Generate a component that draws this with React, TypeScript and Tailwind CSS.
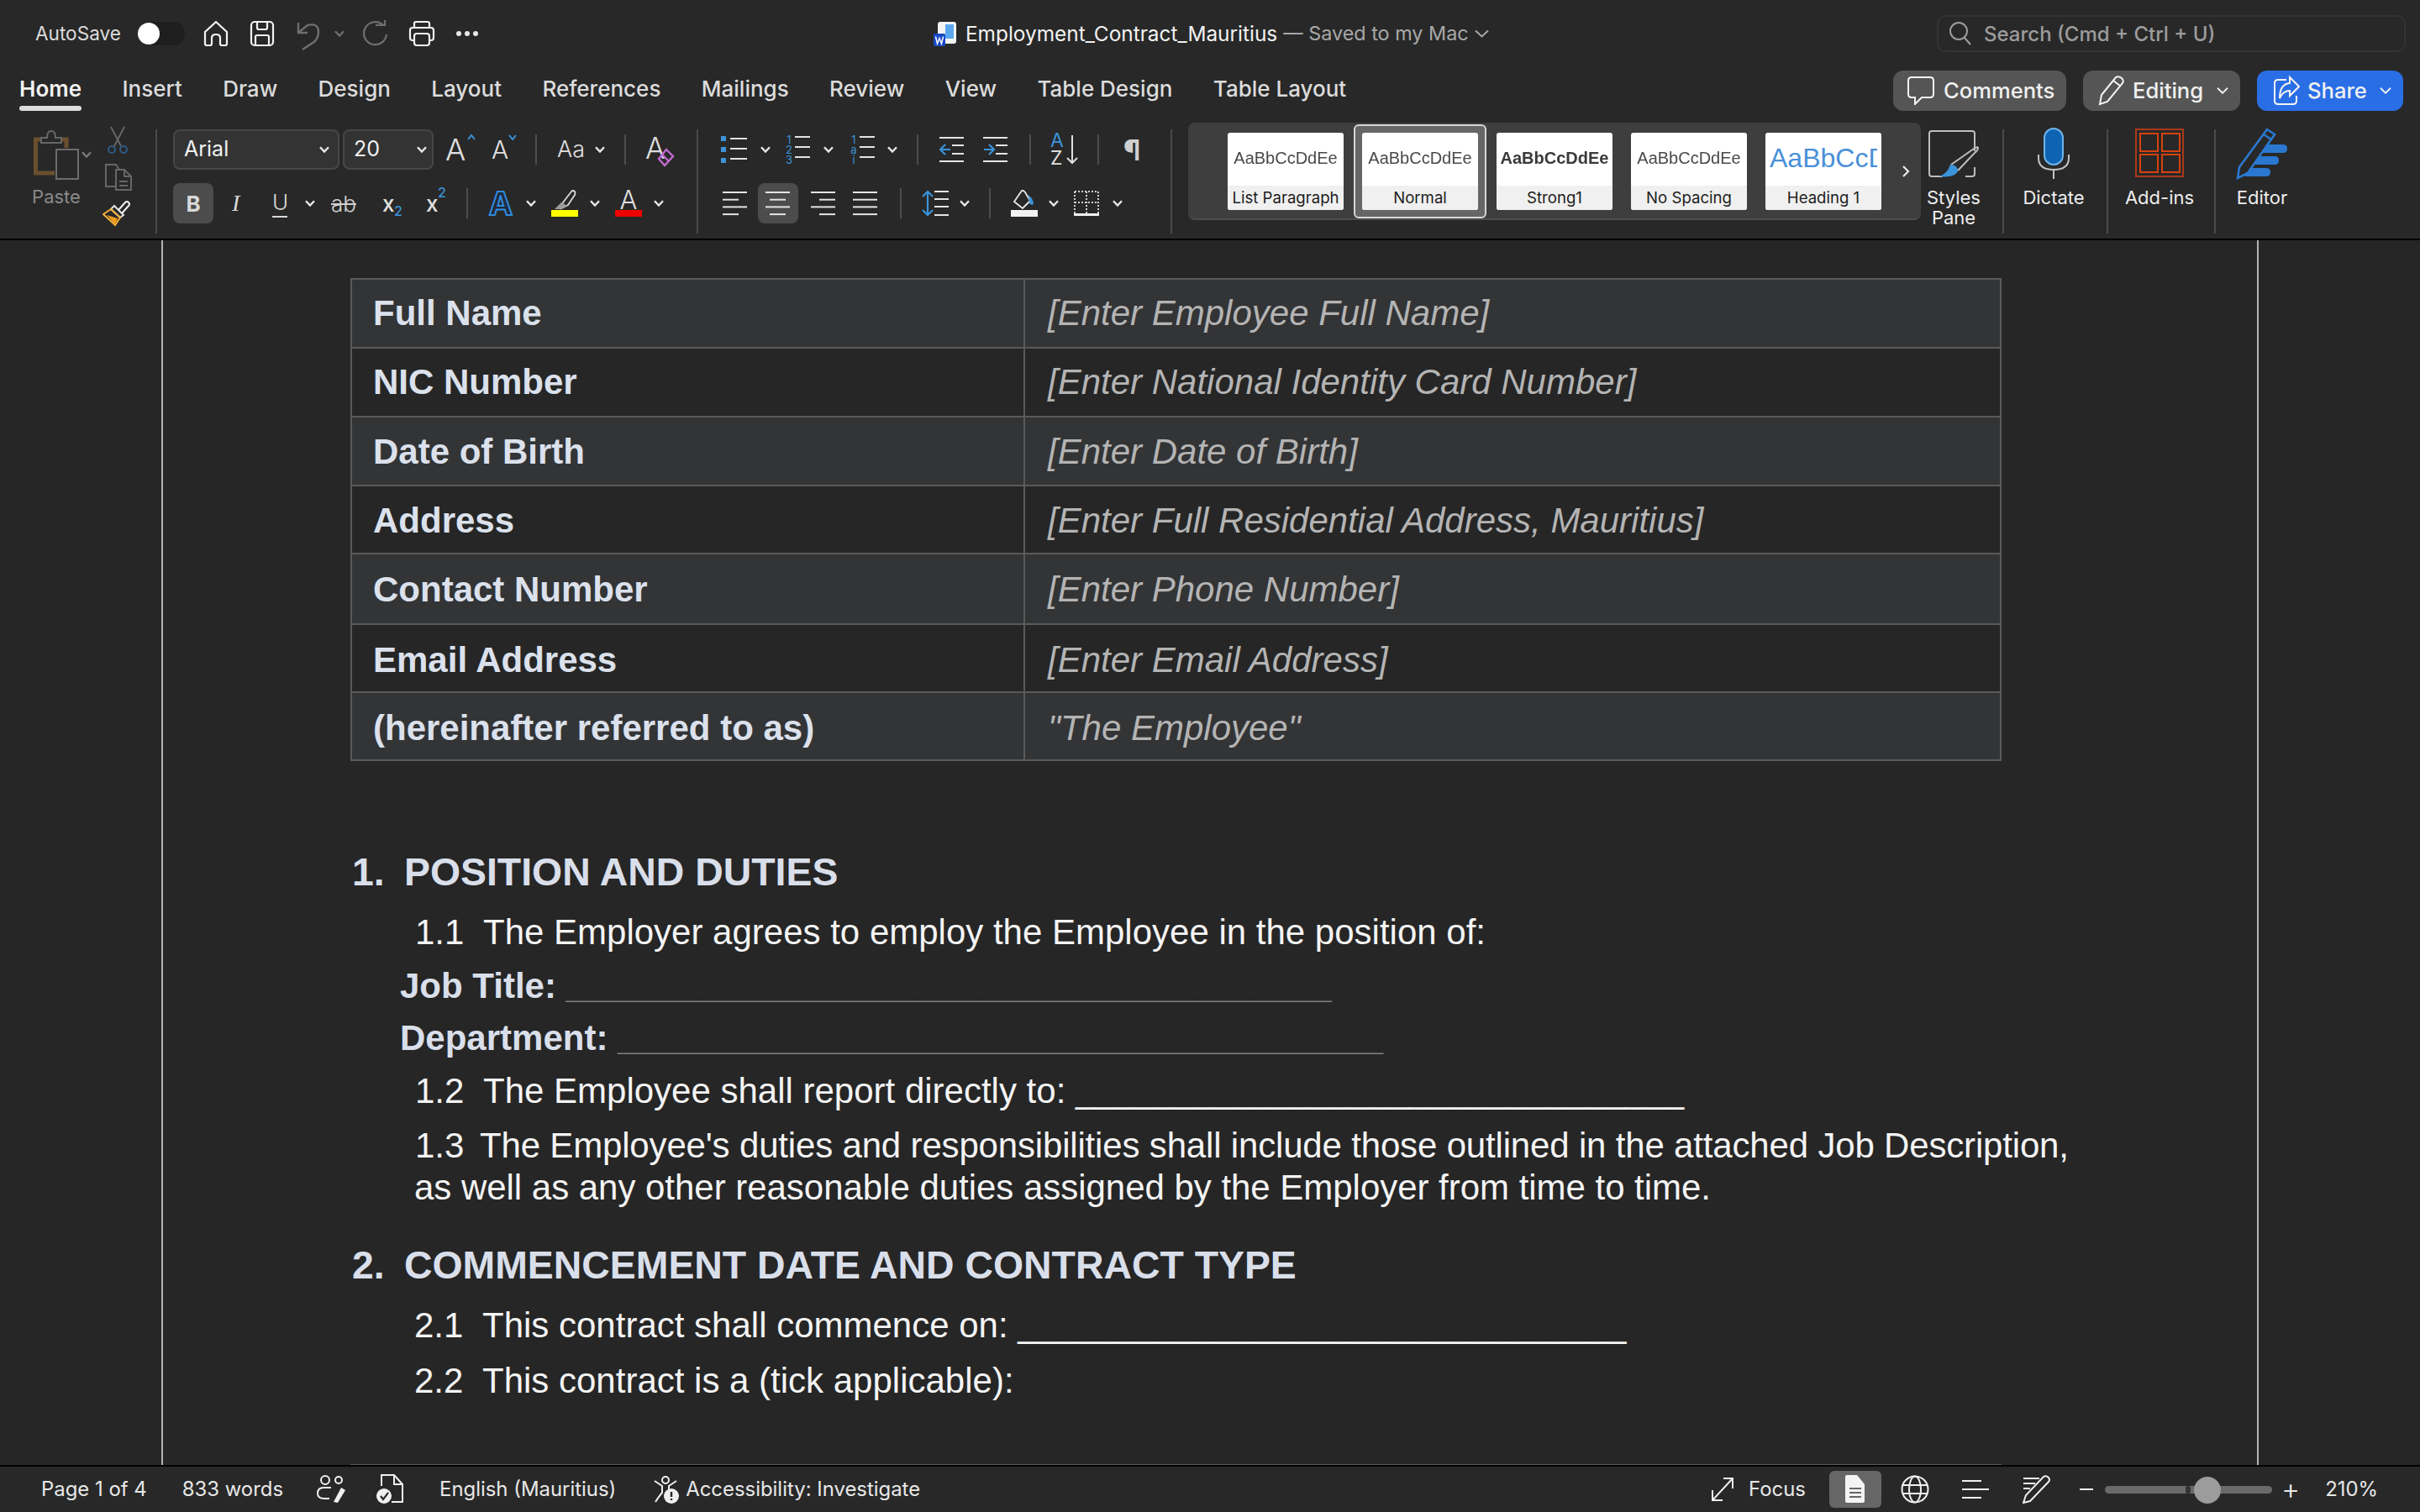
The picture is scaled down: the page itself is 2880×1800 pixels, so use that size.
import type { ReactNode } from 'react';
import { ChevronDown } from 'lucide-react';

function Svg({ w, h, children, className }: { w: number; h: number; children: ReactNode; className?: string }) {
  return (
    <svg width={w} height={h} viewBox={`0 0 ${w} ${h}`} fill="none" className={`shrink-0 ${className ?? ''}`}>
      {children}
    </svg>
  );
}

function Chev({ className = 'ml-[16px]', color = '#e8e8e8' }: { className?: string; color?: string }) {
  return (
    <Svg w={12} h={8} className={className}>
      <path d="M1 1.2 L6 6.5 L11 1.2" stroke={color} strokeWidth="2.4" />
    </Svg>
  );
}

function Sep({ className = '' }: { className?: string }) {
  return <div className={`w-[2px] h-[36px] bg-[#4d4d4d] shrink-0 ${className}`} />;
}

function TallSep() {
  return <div className="w-[2px] mt-[14px] mb-[6px] bg-[#4a4a4a] shrink-0" />;
}

/* title bar icons */
const HomeIcon = () => (
  <Svg w={30} h={32}>
    <path d="M2 14 L15 2 L28 14 V28 Q28 30 26 30 H22 Q20 30 20 28 V21 Q20 17 15 17 Q10 17 10 21 V28 Q10 30 8 30 H4 Q2 30 2 28 Z" stroke="#f2f2f2" strokeWidth="2.2" strokeLinejoin="round" />
  </Svg>
);
const SaveIcon = () => (
  <Svg w={30} h={32}>
    <rect x="2" y="2" width="26" height="28" rx="4" stroke="#f2f2f2" strokeWidth="2.2" />
    <path d="M9 2 V9 Q9 11 11 11 H19 Q21 11 21 9 V2 M7 30 V20 Q7 18 9 18 H21 Q23 18 23 20 V30" stroke="#f2f2f2" strokeWidth="2.2" />
  </Svg>
);
const UndoIcon = () => (
  <Svg w={28} h={36}>
    <path d="M2 2 V14 H13 M3 13 L13 5 Q26 2 26 13 Q26 19 22 24 L7 34" stroke="#6f6f6f" strokeWidth="2.4" />
  </Svg>
);
const RedoIcon = () => (
  <Svg w={30} h={32}>
    <path d="M24 6 A13.5 13.5 0 1 0 28 17" stroke="#6f6f6f" strokeWidth="2.2" />
    <path d="M15 6 H26 V-2" stroke="#6f6f6f" strokeWidth="2.2" />
  </Svg>
);
const PrintIcon = () => (
  <Svg w={32} h={32}>
    <path d="M7 9 V4 Q7 2 9 2 H23 Q25 2 25 4 V9" stroke="#f2f2f2" strokeWidth="2.2" />
    <path d="M7 24 H5 Q2 24 2 21 V12 Q2 9 5 9 H27 Q30 9 30 12 V21 Q30 24 27 24 H25" stroke="#f2f2f2" strokeWidth="2.2" />
    <rect x="7" y="16" width="18" height="14" rx="3" stroke="#f2f2f2" strokeWidth="2.2" />
  </Svg>
);
const WordDoc = () => (
  <Svg w={28} h={30}>
    <rect x="5" y="1" width="22" height="26" rx="3" fill="#f4f4f4" />
    <rect x="14" y="4" width="10" height="17" fill="#5ba8ef" />
    <rect x="0" y="15" width="14" height="15" rx="1.5" fill="#1849c4" />
    <path d="M2.5 18.5 L4.5 27 L7 20.5 L9.5 27 L11.5 18.5" stroke="#fff" strokeWidth="1.5" />
  </Svg>
);

/* clipboard group */
const PasteIcon = () => (
  <Svg w={56} h={60}>
    <path d="M9 12 H3.5 V52 H26" stroke="#6b4f2e" strokeWidth="5" />
    <path d="M34 12 H40 V22" stroke="#6b4f2e" strokeWidth="5" />
    <path d="M10 16 V10 H17 Q17 2 22 2 Q27 2 27 10 H34 V16 Z" stroke="#666" strokeWidth="2" fill="#282828" />
    <rect x="28" y="24" width="26" height="35" stroke="#6c6c6c" strokeWidth="2" />
  </Svg>
);
const CutIcon = () => (
  <Svg w={24} h={34}>
    <path d="M4 1 L16 24 M20 1 L8 24" stroke="#666" strokeWidth="2" />
    <circle cx="5" cy="28" r="4" stroke="#2e5b85" strokeWidth="2" />
    <circle cx="19" cy="28" r="4" stroke="#2e5b85" strokeWidth="2" />
  </Svg>
);
const CopyIcon = () => (
  <Svg w={34} h={34}>
    <path d="M14 28 H2 V2 H14 L18 8" stroke="#666" strokeWidth="2" />
    <path d="M14 8 H24 L32 16 V32 H14 Z M24 8 V16 H32 M18 22 H28 M18 27 H28" stroke="#666" strokeWidth="2" />
  </Svg>
);
const BrushIcon = () => (
  <Svg w={34} h={32}>
    <path d="M19 12 L27 3 Q29 1 31 3 Q33 5 31 7 L23 16" stroke="#f0f0f0" strokeWidth="2" />
    <path d="M14 7 L25 18 L21 21 L10 11 Z" stroke="#e6e6e6" strokeWidth="2" />
    <path d="M10 11 L1 17 L15 30 L21 21 Z" stroke="#f4b03f" strokeWidth="2" />
    <path d="M5 18 L18 22 L15 29 Z" fill="#f09a1a" />
  </Svg>
);

/* home tab, lists */
const ListLines = ({ x = 0, w = 20 }: { x?: number; w?: number }) => (
  <path d={`M${x} 3 h${w} M${x} 15 h${w} M${x} 27 h${w}`} stroke="#e4e4e4" strokeWidth="2" />
);
const BulletIcon = () => (
  <Svg w={31} h={32}>
    <rect x="0" y="0" width="6" height="6" fill="#3b93d9" />
    <rect x="0" y="13" width="6" height="6" fill="#3b93d9" />
    <rect x="0" y="26" width="6" height="6" fill="#3b93d9" />
    <ListLines x={11} />
  </Svg>
);
const NumberIcon = ({ marks }: { marks: string[] }) => (
  <div className="relative w-[31px] h-[36px] shrink-0 font-['Inter',sans-serif] text-[13px] leading-[12px] text-[#3b93d9]">
    <div className="flex flex-col w-[10px] items-center">
      {marks.map((m) => (
        <span key={m}>{m}</span>
      ))}
    </div>
    <svg width="31" height="32" viewBox="0 0 31 32" fill="none" className="absolute left-0 top-0">
      <ListLines x={12} w={18} />
    </svg>
  </div>
);
const IndentIcon = ({ flip }: { flip?: boolean }) => (
  <Svg w={30} h={32}>
    <path d="M0 2 H29 M0 30 H29 M15 11 H29 M15 21 H29" stroke="#e4e4e4" strokeWidth="2" />
    {flip ? (
      <path d="M1 16 H12 M7 10 L13 16 L7 22" stroke="#3b93d9" strokeWidth="2.2" />
    ) : (
      <path d="M13 16 H2 M7 10 L1 16 L7 22" stroke="#3b93d9" strokeWidth="2.2" />
    )}
  </Svg>
);
const AlignIcon = ({ lines }: { lines: [number, number][] }) => (
  <Svg w={30} h={30}>
    {lines.map(([a, b], i) => (
      <path key={i} d={`M${a} ${2 + i * 8.7} H${b}`} stroke="#e4e4e4" strokeWidth="2" />
    ))}
  </Svg>
);
const LineSpacingIcon = () => (
  <Svg w={34} h={34}>
    <path d="M8 3 V31 M2 9 L8 3 L14 9 M2 25 L8 31 L14 25" stroke="#3b93d9" strokeWidth="2.2" />
    <path d="M16 3 H33 M16 12 H33 M16 21 H33 M16 31 H33" stroke="#e4e4e4" strokeWidth="2" />
  </Svg>
);
const ShadeIcon = () => (
  <Svg w={34} h={32}>
    <path d="M14 1 L5 14 L15 22 L24 13 L18 3 Q16 0 14 1 Z" stroke="#e8e8e8" strokeWidth="1.8" />
    <path d="M22 6 Q28 11 28 17 Q25 19 23 16 Z" fill="#3b93d9" />
    <rect x="1" y="24" width="32" height="8" fill="#f2f2f2" />
  </Svg>
);
const BorderIcon = () => (
  <Svg w={30} h={30}>
    <path d="M1 1 H29 M1 1 V27 M29 1 V27 M15 1 V27 M1 14 H29" stroke="#cfcfcf" strokeWidth="2" strokeDasharray="2 2" />
    <path d="M0 28.5 H30" stroke="#f2f2f2" strokeWidth="3" />
  </Svg>
);
const HighlightIcon = () => (
  <Svg w={32} h={32}>
    <path d="M14 15 L24 2 Q26 0 28 2 Q29 4 28 6 L20 18 L12 22 Z" stroke="#d8d8d8" strokeWidth="1.8" />
    <path d="M12 15 L19 19 L11 23 L4 23 Z" fill="#9a9a9a" />
    <rect x="0" y="24" width="32" height="8" fill="#ffff00" />
  </Svg>
);
const EraserA = () => (
  <div className="relative w-[34px] h-[40px] shrink-0">
    <span className="font-['Inter',sans-serif] font-light text-[35px] leading-[36px] text-[#dedede]">A</span>
    <svg width="22" height="24" viewBox="0 0 22 24" fill="none" className="absolute left-[14px] top-[18px]">
      <path d="M11 2 L19 10 L9 21 L2 13 Z" stroke="#c26bd0" strokeWidth="2.4" />
      <path d="M6 8 L14 16" stroke="#c26bd0" strokeWidth="2.4" />
    </svg>
  </div>
);

/* right side ribbon */
const StylesPaneIcon = () => (
  <Svg w={62} h={60}>
    <path d="M18 56 H5 Q2 56 2 53 V5 Q2 2 5 2 H53 Q56 2 56 5 V26 M56 45 V53 Q56 56 53 56 H45" stroke="#bdbdbd" strokeWidth="2" />
    <path d="M28 42 L55 23 Q60 20 60 22 Q60 25 56 28 L36 49" stroke="#bdbdbd" strokeWidth="2" />
    <path d="M27 42 Q36 42 36 50 Q32 58 14 56 Q24 52 27 42 Z" fill="#3b93d9" />
  </Svg>
);
const DictateIcon = () => (
  <Svg w={40} h={62}>
    <rect x="9" y="1" width="22" height="43" rx="11" fill="#0f63b3" stroke="#6db4e8" strokeWidth="2" />
    <path d="M2 32 V36 Q2 50 20 50 Q38 50 38 36 V32" stroke="#c4c4c4" strokeWidth="2" />
    <path d="M20 50 V61" stroke="#c4c4c4" strokeWidth="2" />
  </Svg>
);
const AddinsIcon = () => (
  <Svg w={58} h={58}>
    <rect x="1" y="1" width="56" height="56" stroke="#a8391a" strokeWidth="2" />
    <rect x="6" y="6" width="21" height="21" stroke="#d6420f" strokeWidth="2" />
    <rect x="32" y="6" width="21" height="21" stroke="#d6420f" strokeWidth="2" />
    <rect x="6" y="31" width="21" height="21" stroke="#d6420f" strokeWidth="2" />
    <rect x="32" y="31" width="21" height="21" stroke="#d6420f" strokeWidth="2" />
  </Svg>
);
const EditorIcon = () => (
  <Svg w={62} h={62}>
    <path d="M37 2 L46 8 L14 54 L2 60 L4 47 Z M33 8 L42 14" stroke="#2a78d0" strokeWidth="2.6" />
    <path d="M36 20 H56 Q61 20 61 25 Q61 30 56 30 H30 Z" fill="#2a78d0" />
    <path d="M27 34 H46 Q51 34 51 39 Q51 44 46 44 H20 Z" fill="#2a78d0" />
    <path d="M17 48 H36 Q41 48 41 53 Q41 58 36 58 H10 Z" fill="#2a78d0" />
  </Svg>
);

/* status bar icons */
const ReviewersIcon = () => (
  <Svg w={36} h={34}>
    <circle cx="11" cy="6" r="5" stroke="#f0f0f0" strokeWidth="2" />
    <circle cx="27" cy="6" r="4" stroke="#f0f0f0" strokeWidth="2" />
    <path d="M18 15 H9 Q2 15 2 22 Q2 28 10 28 H16" stroke="#f0f0f0" strokeWidth="2" />
    <path d="M30 15 L35 18 L26 33 L21 32 Z" fill="#f0f0f0" />
  </Svg>
);
const SpellIcon = () => (
  <Svg w={32} h={36}>
    <path d="M6 14 V1 H21 L31 12 V33 H18 M21 1 V12 H31" stroke="#f0f0f0" strokeWidth="2" />
    <circle cx="9" cy="26" r="9" fill="#f0f0f0" />
    <path d="M5 26 L8 30 L14 22" stroke="#282828" strokeWidth="2.2" />
  </Svg>
);
const AccessIcon = () => (
  <Svg w={32} h={36}>
    <circle cx="15" cy="7" r="4" stroke="#f0f0f0" strokeWidth="2" />
    <path d="M2 8 L11 14 V22 Q6 28 3 33 M28 8 L19 14 V18" stroke="#f0f0f0" strokeWidth="2" />
    <circle cx="22" cy="26" r="9" fill="#f0f0f0" />
    <path d="M22 21 V27 M22 29 V31" stroke="#282828" strokeWidth="2.4" />
  </Svg>
);

function Tile({ label, selected, children }: { label: string; selected?: boolean; children: ReactNode }) {
  const tile = (
    <div className="w-[138px] h-[92px] rounded-[3px] overflow-hidden flex flex-col bg-white shrink-0">
      <div className="h-[63px] flex items-center justify-center overflow-hidden pb-[4px]">{children}</div>
      <div className="flex-1 bg-[#f0f0f0] text-[#1d1d1d] text-[18.6px] leading-[28px] text-center whitespace-nowrap font-['Inter',sans-serif]">
        {label}
      </div>
    </div>
  );
  if (!selected) return tile;
  return (
    <div className="-mx-[10px] p-[8px] rounded-[6px] border-2 border-[#d6d6d6] bg-[#666666] shrink-0">{tile}</div>
  );
}

const preview = "font-['Liberation_Sans',sans-serif] text-[20px] whitespace-nowrap blur-[0.4px]";

const tabs = ['Home', 'Insert', 'Draw', 'Design', 'Layout', 'References', 'Mailings', 'Review', 'View', 'Table Design', 'Table Layout'];

const tableRows: [string, string, string][] = [
  ['Full Name', '[Enter Employee Full Name]', 'h-[82px] leading-[80px] bg-[#333436]'],
  ['NIC Number', '[Enter National Identity Card Number]', 'h-[82px] leading-[80px] bg-[#262626]'],
  ['Date of Birth', '[Enter Date of Birth]', 'h-[82px] leading-[81px] bg-[#333436]'],
  ['Address', '[Enter Full Residential Address, Mauritius]', 'h-[81px] leading-[81px] bg-[#262626]'],
  ['Contact Number', '[Enter Phone Number]', 'h-[84px] leading-[83px] bg-[#333436]'],
  ['Email Address', '[Enter Email Address]', 'h-[81px] leading-[83px] bg-[#262626]'],
  ['(hereinafter referred to as)', '"The Employee"', 'h-[81px] leading-[83px] bg-[#333436]'],
];

function Numbered({ num, className, children }: { num: string; className: string; children: ReactNode }) {
  return (
    <div className={`flex pl-[77px] h-[50px] leading-[50px] text-[42px] text-[#f4f4f4] whitespace-pre ${className}`}>
      <span className="w-[81px] shrink-0">{num}</span>
      <span>{children}</span>
    </div>
  );
}

function Heading({ num, className, children }: { num: string; className: string; children: ReactNode }) {
  return (
    <div className={`flex pl-[2px] h-[50px] leading-[50px] text-[46.4px] font-bold text-[#d9dfea] whitespace-pre ${className}`}>
      <span className="w-[62px] shrink-0">{num}</span>
      <span>{children}</span>
    </div>
  );
}

export default function App() {
  return (
    <div className="w-[2880px] h-[1800px] overflow-hidden flex flex-col bg-[#282828] font-['Inter',sans-serif] text-[#f0f0f0]">
      {/* Title bar */}
      <div className="h-[80px] shrink-0 relative flex items-center pl-[42px]">
        <span className="text-[22.6px] text-[#dcdcdc]">AutoSave</span>
        <div className="ml-[20px] w-[56px] h-[28px] rounded-full bg-[#1e1e1e] flex items-center">
          <div className="w-[26px] h-[26px] rounded-full bg-white" />
        </div>
        <div className="ml-[22px] flex items-center">
          <HomeIcon />
          <div className="ml-[25px]"><SaveIcon /></div>
          <div className="ml-[26px] mt-[6px]"><UndoIcon /></div>
          <Chev className="ml-[17px]" color="#6f6f6f" />
          <div className="ml-[22px]"><RedoIcon /></div>
          <div className="ml-[24px]"><PrintIcon /></div>
          <div className="ml-[25px] flex gap-[4px]">
            <span className="w-[6px] h-[6px] rounded-full bg-[#e8e8e8]" />
            <span className="w-[6px] h-[6px] rounded-full bg-[#e8e8e8]" />
            <span className="w-[6px] h-[6px] rounded-full bg-[#e8e8e8]" />
          </div>
        </div>
        <div className="ml-[542px] flex items-center">
          <WordDoc />
          <span className="ml-[10px] text-[24.4px] text-[#f2f2f2] whitespace-nowrap">Employment_Contract_Mauritius</span>
          <span className="ml-[7px] text-[23.4px] text-[#a8a8a8] whitespace-nowrap">— Saved to my Mac</span>
          <Svg w={17} h={10} className="ml-[7px]">
            <path d="M1 1.5 L8.5 8.5 L16 1.5" stroke="#a8a8a8" strokeWidth="2" />
          </Svg>
        </div>
        <div className="absolute left-[2305px] top-[18px] w-[558px] h-[44px] rounded-[10px] border-2 border-[#333333] flex items-center pl-[12px]">
          <svg width="28" height="30" viewBox="0 0 28 30" fill="none">
            <circle cx="12" cy="12" r="10" stroke="#9c9c9c" strokeWidth="2" />
            <path d="M19 20 L26 28" stroke="#9c9c9c" strokeWidth="2" />
          </svg>
          <span className="ml-[14px] mt-[2px] text-[24px] font-medium text-[#9c9c9c]">Search (Cmd + Ctrl + U)</span>
        </div>
      </div>

      {/* Tabs */}
      <div className="h-[60px] shrink-0 flex items-start justify-between pl-[23px] pr-[20px]">
        <div className="flex gap-[48.4px] pt-[6px] text-[26px] font-medium text-[#dcdcdc]">
          {tabs.map((t) => (
            <div key={t} className={t === 'Home' ? 'relative text-[#f2f2f2] font-semibold whitespace-nowrap' : 'whitespace-nowrap'}>
              {t}
              {t === 'Home' && <div className="absolute -bottom-[7px] left-0 right-0 h-[6px] rounded-full bg-[#dcdcdc]" />}
            </div>
          ))}
        </div>
        <div className="flex gap-[20px] mt-[4px] text-[25.6px] font-medium">
          <div className="w-[206px] h-[48px] rounded-[12px] bg-[#555555] flex items-center pl-[17px]">
            <svg width="32" height="34" viewBox="0 0 32 34" fill="none">
              <path d="M5 1 H27 Q31 1 31 5 V21 Q31 25 27 25 H17 L9 33 L9 25 H5 Q1 25 1 21 V5 Q1 1 5 1 Z" stroke="#f4f4f4" strokeWidth="2" />
            </svg>
            <span className="ml-[11px]">Comments</span>
          </div>
          <div className="w-[187px] h-[48px] rounded-[12px] bg-[#555555] flex items-center pl-[18px]">
            <svg width="32" height="36" viewBox="0 0 32 36" fill="none">
              <path d="M2 34 L4 23 L21 2 Q24 0 28 3 Q31 6 29 9 L11 31 Z M18 6 L26 12" stroke="#f4f4f4" strokeWidth="2" />
            </svg>
            <span className="ml-[9px]">Editing</span>
            <ChevronDown className="ml-[12px]" size={22} strokeWidth={2} />
          </div>
          <div className="w-[174px] h-[48px] rounded-[12px] bg-[#2a6ee6] flex items-center pl-[19px]">
            <svg width="32" height="36" viewBox="0 0 32 36" fill="none">
              <path d="M16 5 H6 Q2 5 2 9 V30 Q2 34 6 34 H24 Q28 34 28 30 V24" stroke="#f4f4f4" strokeWidth="2" />
              <path d="M20 2 L31 13 L20 24 V18 Q12 18 8 27 Q8 10 20 9 Z" stroke="#f4f4f4" strokeWidth="2" />
            </svg>
            <span className="ml-[9px]">Share</span>
            <ChevronDown className="ml-[11px]" size={22} strokeWidth={2} />
          </div>
        </div>
      </div>

      {/* Ribbon */}
      <div className="h-[144px] shrink-0 flex">
        <div className="w-[185px] flex shrink-0 pl-[33px]">
          <div className="flex flex-col items-center w-[68px] mt-[14px]">
            <PasteIcon />
            <span className="mt-[7px] text-[22px] leading-[26px] text-[#8a8a8a]">Paste</span>
          </div>
          <Chev className="mt-[40px] ml-[-4px]" color="#7a7a7a" />
          <div className="flex flex-col ml-[13px] mt-[10px]">
            <div className="ml-[6px]"><CutIcon /></div>
            <div className="ml-[2px] mt-[10px]"><CopyIcon /></div>
            <div className="mt-[10px]"><BrushIcon /></div>
          </div>
        </div>
        <TallSep />

        {/* Font group */}
        <div className="w-[642px] shrink-0 pl-[19px] flex flex-col">
          <div className="mt-[14px] h-[48px] flex items-center">
            <div className="w-[198px] h-[48px] rounded-[8px] bg-[#333333] border-2 border-[#474747] flex items-center justify-between pl-[11px] pr-[10px] text-[25px]">
              Arial <Chev className="ml-0" />
            </div>
            <div className="ml-[4px] w-[108px] h-[48px] rounded-[8px] bg-[#333333] border-2 border-[#474747] flex items-center justify-between pl-[11px] pr-[6px] text-[25px]">
              20 <Chev className="ml-0" />
            </div>
            <div className="ml-[14px] w-[32px] relative text-[36px] font-light leading-[40px] text-[#e0e0e0]">
              A
              <svg width="10" height="7" viewBox="0 0 10 7" fill="none" className="absolute left-[26px] top-[2px]">
                <path d="M1 6 L5 1 L9 6" stroke="#3b93d9" strokeWidth="2" />
              </svg>
            </div>
            <div className="ml-[23px] w-[28px] relative text-[30px] font-light leading-[40px] text-[#e0e0e0]">
              A
              <svg width="10" height="7" viewBox="0 0 10 7" fill="none" className="absolute left-[20px] top-[2px]">
                <path d="M1 1 L5 6 L9 1" stroke="#3b93d9" strokeWidth="2" />
              </svg>
            </div>
            <Sep className="ml-[24px]" />
            <span className="ml-[24px] w-[33px] text-[27px] leading-[36px] font-light text-[#e0e0e0] whitespace-nowrap">Aa</span>
            <Chev className="ml-[12px]" />
            <Sep className="ml-[23px]" />
            <div className="ml-[23px]"><EraserA /></div>
          </div>
          <div className="mt-[16px] h-[48px] flex items-center">
            <div className="w-[48px] h-[48px] rounded-[8px] bg-[#4c4c4c] flex items-center justify-center text-[26px] font-bold text-[#d8d8d8]">B</div>
            <span className="ml-[22px] w-[10px] font-['Liberation_Serif',serif] italic text-[28px] text-[#d8d8d8]">I</span>
            <span className="ml-[38px] w-[18px] text-[26px] font-light leading-[32px] text-[#d8d8d8] border-b-2 border-[#d8d8d8]">U</span>
            <Chev className="ml-[21px]" />
            <span className="ml-[19px] w-[32px] text-[26px] font-light text-[#d0d0d0] line-through">ab</span>
            <span className="ml-[29px] text-[26px] font-medium text-[#e0e0e0] relative w-[28px]">
              x<span className="absolute left-[14px] top-[16px] text-[16px] text-[#3b93d9]">2</span>
            </span>
            <span className="ml-[24px] text-[26px] font-medium text-[#e0e0e0] relative w-[28px]">
              x<span className="absolute left-[14px] -top-[6px] text-[16px] text-[#3b93d9]">2</span>
            </span>
            <Sep className="ml-[20px]" />
            <span className="ml-[23px] w-[32px] text-center text-[38px] font-bold leading-[44px] text-[#1f2b3a] [-webkit-text-stroke:2px_#2f8ade]">A</span>
            <Chev className="ml-[14px]" />
            <div className="ml-[18px]"><HighlightIcon /></div>
            <Chev className="ml-[14px]" />
            <div className="ml-[18px] w-[32px] flex flex-col items-center">
              <span className="text-[31px] font-light leading-[24px] text-[#e0e0e0]">A</span>
              <div className="w-[32px] h-[8px] bg-[#ee0000]" />
            </div>
            <Chev className="ml-[14px]" />
          </div>
        </div>
        <TallSep />

        {/* Paragraph group */}
        <div className="w-[562px] shrink-0 pl-[27px] flex flex-col">
          <div className="mt-[14px] h-[48px] flex items-center">
            <BulletIcon />
            <Chev className="ml-[16px]" />
            <div className="ml-[17px]"><NumberIcon marks={['1', '2', '3']} /></div>
            <Chev className="ml-[15px]" />
            <div className="ml-[19px]"><NumberIcon marks={['1', 'a', 'i']} /></div>
            <Chev className="ml-[14px]" />
            <Sep className="ml-[23px]" />
            <div className="ml-[25px]"><IndentIcon /></div>
            <div className="ml-[22px]"><IndentIcon flip /></div>
            <Sep className="ml-[25px]" />
            <div className="ml-[23px] w-[34px] relative h-[42px] text-[23px] leading-[21px] text-[#e0e0e0]">
              <span className="block text-[#3b93d9]">A</span>
              <span className="block">Z</span>
              <svg width="14" height="36" viewBox="0 0 14 36" fill="none" className="absolute left-[19px] top-[3px]">
                <path d="M7 1 V34 M1 28 L7 34 L13 28" stroke="#e0e0e0" strokeWidth="2" />
              </svg>
            </div>
            <Sep className="ml-[22px]" />
            <span className="ml-[29px] text-[34px] font-bold text-[#cfcfcf]">¶</span>
          </div>
          <div className="mt-[16px] h-[48px] flex items-center">
            <div className="ml-[2px]"><AlignIcon lines={[[0, 29], [0, 19], [0, 29], [0, 19]]} /></div>
            <div className="ml-[12px] w-[48px] h-[48px] rounded-[8px] bg-[#4c4c4c] flex items-center justify-center">
              <AlignIcon lines={[[0, 29], [5, 24], [0, 29], [5, 24]]} />
            </div>
            <div className="ml-[15px]"><AlignIcon lines={[[0, 29], [10, 29], [0, 29], [10, 29]]} /></div>
            <div className="ml-[20px]"><AlignIcon lines={[[0, 29], [0, 29], [0, 29], [0, 29]]} /></div>
            <Sep className="ml-[26px]" />
            <div className="ml-[23px]"><LineSpacingIcon /></div>
            <Chev className="ml-[12px]" />
            <Sep className="ml-[23px]" />
            <div className="ml-[23px]"><ShadeIcon /></div>
            <Chev className="ml-[12px]" />
            <div className="ml-[18px]"><BorderIcon /></div>
            <Chev className="ml-[16px]" />
          </div>
        </div>
        <TallSep />

        {/* Styles gallery */}
        <div className="ml-[19px] mt-[6px] w-[872px] h-[116px] rounded-[8px] bg-[#3e3e3e] border-b-2 border-[#4c4c4c] flex items-center pl-[47px] pt-[2px] gap-[22px] shrink-0">
          <Tile label="List Paragraph"><span className={`${preview} text-[#4a4a4a]`}>AaBbCcDdEe</span></Tile>
          <Tile label="Normal" selected><span className={`${preview} text-[#4a4a4a]`}>AaBbCcDdEe</span></Tile>
          <Tile label="Strong1"><span className={`${preview} font-bold text-[#3a3a3a]`}>AaBbCcDdEe</span></Tile>
          <Tile label="No Spacing"><span className={`${preview} text-[#4a4a4a]`}>AaBbCcDdEe</span></Tile>
          <Tile label="Heading 1">
            <span className="w-[128px] overflow-hidden font-['Liberation_Sans',sans-serif] text-[32px] whitespace-nowrap text-[#4a90d9]">AaBbCcDdEe</span>
          </Tile>
          <svg width="10" height="16" viewBox="0 0 10 16" fill="none" className="ml-[2px]">
            <path d="M2 2 L8 8 L2 14" stroke="#e8e8e8" strokeWidth="2.2" />
          </svg>
        </div>

        <div className="w-[97px] shrink-0 pr-[19px] flex flex-col items-center pt-[14px] text-[22px] leading-[24px] text-[#ededed] text-center">
          <div className="h-[60px]"><StylesPaneIcon /></div>
          <span className="mt-[9px]">Styles<br />Pane</span>
        </div>
        <TallSep />
        <div className="w-[122px] shrink-0 pr-[4px] flex flex-col items-center pt-[12px] text-[22px] leading-[24px] text-[#ededed]">
          <div className="h-[62px]"><DictateIcon /></div>
          <span className="mt-[9px]">Dictate</span>
        </div>
        <TallSep />
        <div className="w-[126px] shrink-0 pr-[4px] flex flex-col items-center pt-[13px] text-[22px] leading-[24px] text-[#ededed]">
          <div className="h-[61px]"><AddinsIcon /></div>
          <span className="mt-[9px]">Add-ins</span>
        </div>
        <TallSep />
        <div className="w-[114px] shrink-0 pr-[4px] flex flex-col items-center pt-[12px] text-[22px] leading-[24px] text-[#ededed]">
          <div className="h-[62px]"><EditorIcon /></div>
          <span className="mt-[9px]">Editor</span>
        </div>
      </div>

      {/* Document */}
      <div className="h-[1462px] shrink-0 border-y-2 border-black bg-[#262626] overflow-hidden font-['Liberation_Sans',sans-serif]">
        <div className="ml-[192px] w-[2496px] h-full border-x-2 border-[#b4b4b4] pl-[223px] pt-[45px]">
          <div className="w-[1965px] border-x-2 border-b-2 border-[#5a5a5a] flex flex-col">
            {tableRows.map(([label, value, row]) => (
              <div key={label} className={`flex text-[42px] border-t-2 border-[#5a5a5a] ${row}`}>
                <div className="w-[801px] shrink-0 pl-[25px] font-bold text-[#dbe1ec] border-r-2 border-[#5a5a5a]">{label}</div>
                <div className="pl-[27px] italic text-[#b4b4b4]">{value}</div>
              </div>
            ))}
          </div>

          <Heading num="1." className="mt-[107px]">POSITION AND DUTIES</Heading>
          <Numbered num="1.1" className="mt-[22px]">The Employer agrees to employ the Employee in the position of:</Numbered>
          <div className="mt-[14px] pl-[59px] h-[50px] leading-[50px] text-[42px] font-bold text-[#d9dfea] whitespace-pre">
            Job Title: <span className="text-[#808080]">_______________________________________</span>
          </div>
          <div className="mt-[12px] pl-[59px] h-[50px] leading-[50px] text-[42px] font-bold text-[#d9dfea] whitespace-pre">
            Department: <span className="text-[#808080]">_______________________________________</span>
          </div>
          <Numbered num="1.2" className="mt-[13px]">The Employee shall report directly to: _______________________________</Numbered>
          <div className="mt-[15px] pl-[76px] text-[42px] leading-[50px] text-[#f4f4f4] whitespace-nowrap">
            <div className="flex whitespace-pre tracking-[-0.17px]">
              <span className="w-[78px] shrink-0 pl-[1px] tracking-normal">1.3</span>
              <span>The Employee's duties and responsibilities shall include those outlined in the attached Job Description,</span>
            </div>
            <div className="tracking-[-0.03px]">as well as any other reasonable duties assigned by the Employer from time to time.</div>
          </div>
          <Heading num="2." className="mt-[42px]">COMMENCEMENT DATE AND CONTRACT TYPE</Heading>
          <Numbered num="2.1" className="mt-[22px] -ml-[1px]">This contract shall commence on: _______________________________</Numbered>
          <Numbered num="2.2" className="mt-[16px] -ml-[1px]">This contract is a (tick applicable):</Numbered>
          <div className="mt-[74px] w-[1965px] h-[2px] bg-[#5a5a5a]" />
        </div>
      </div>

      {/* Status bar */}
      <div className="flex-1 flex items-center pl-[49px] text-[23.9px] text-[#e8e8e8]">
        <span>Page 1 of 4</span>
        <span className="ml-[42px]">833 words</span>
        <div className="ml-[39px]"><ReviewersIcon /></div>
        <div className="ml-[36px]"><SpellIcon /></div>
        <span className="ml-[43px]">English (Mauritius)</span>
        <div className="ml-[44px]"><AccessIcon /></div>
        <span className="ml-[7px]">Accessibility: Investigate</span>

        <div className="ml-auto flex items-center pr-[50px]">
          <svg width="28" height="30" viewBox="0 0 28 30" fill="none">
            <path d="M2 28 L26 2 M15 2 H26 V14 M2 16 V28 H14" stroke="#f0f0f0" strokeWidth="2" />
          </svg>
          <span className="ml-[17px]">Focus</span>
          <div className="ml-[28px] w-[62px] h-[44px] rounded-[6px] bg-[#666666] flex items-center justify-center">
            <svg width="26" height="34" viewBox="0 0 26 34" fill="none">
              <path d="M3 0 H15 L24 11 V31 Q24 33 22 33 H3 Q1 33 1 31 V2 Q1 0 3 0 Z" fill="#f4f4f4" />
              <path d="M6 16 H20 M6 21 H20 M6 26 H20" stroke="#666" strokeWidth="2" />
            </svg>
          </div>
          <svg width="34" height="34" viewBox="0 0 34 34" fill="none" className="ml-[23px]">
            <circle cx="17" cy="17" r="15.5" stroke="#f0f0f0" strokeWidth="2" />
            <ellipse cx="17" cy="17" rx="7" ry="15.5" stroke="#f0f0f0" strokeWidth="2" />
            <path d="M2 12 H32 M2 22 H32" stroke="#f0f0f0" strokeWidth="2" />
          </svg>
          <svg width="34" height="24" viewBox="0 0 34 24" fill="none" className="ml-[38px]">
            <path d="M1 2 H24 M1 12 H33 M1 22 H24" stroke="#f0f0f0" strokeWidth="2" />
          </svg>
          <svg width="34" height="34" viewBox="0 0 34 34" fill="none" className="ml-[39px]">
            <path d="M1 33 L4 24 L25 2 Q28 0 31 3 Q33 6 31 8 L9 31 Z M1 33 L4 24" stroke="#f0f0f0" strokeWidth="2" />
            <path d="M1 4 H20 M1 10 H15 M1 16 H9" stroke="#f0f0f0" strokeWidth="2" />
          </svg>
          <span className="ml-[34px] w-[16px] h-[2px] bg-[#f0f0f0]" />
          <div className="ml-[14px] w-[199px] h-[9px] rounded-full bg-[#6a6a6a] relative flex items-center">
            <div className="ml-[96px] w-[6px] h-[9px] rounded-full bg-[#333333]" />
            <div className="absolute left-[106px] top-[-11px] w-[32px] h-[32px] rounded-full bg-[#9c9c9c]" />
          </div>
          <span className="ml-[11px] text-[34px] leading-[34px] font-light">+</span>
          <span className="ml-[30px]">210%</span>
        </div>
      </div>
    </div>
  );
}
